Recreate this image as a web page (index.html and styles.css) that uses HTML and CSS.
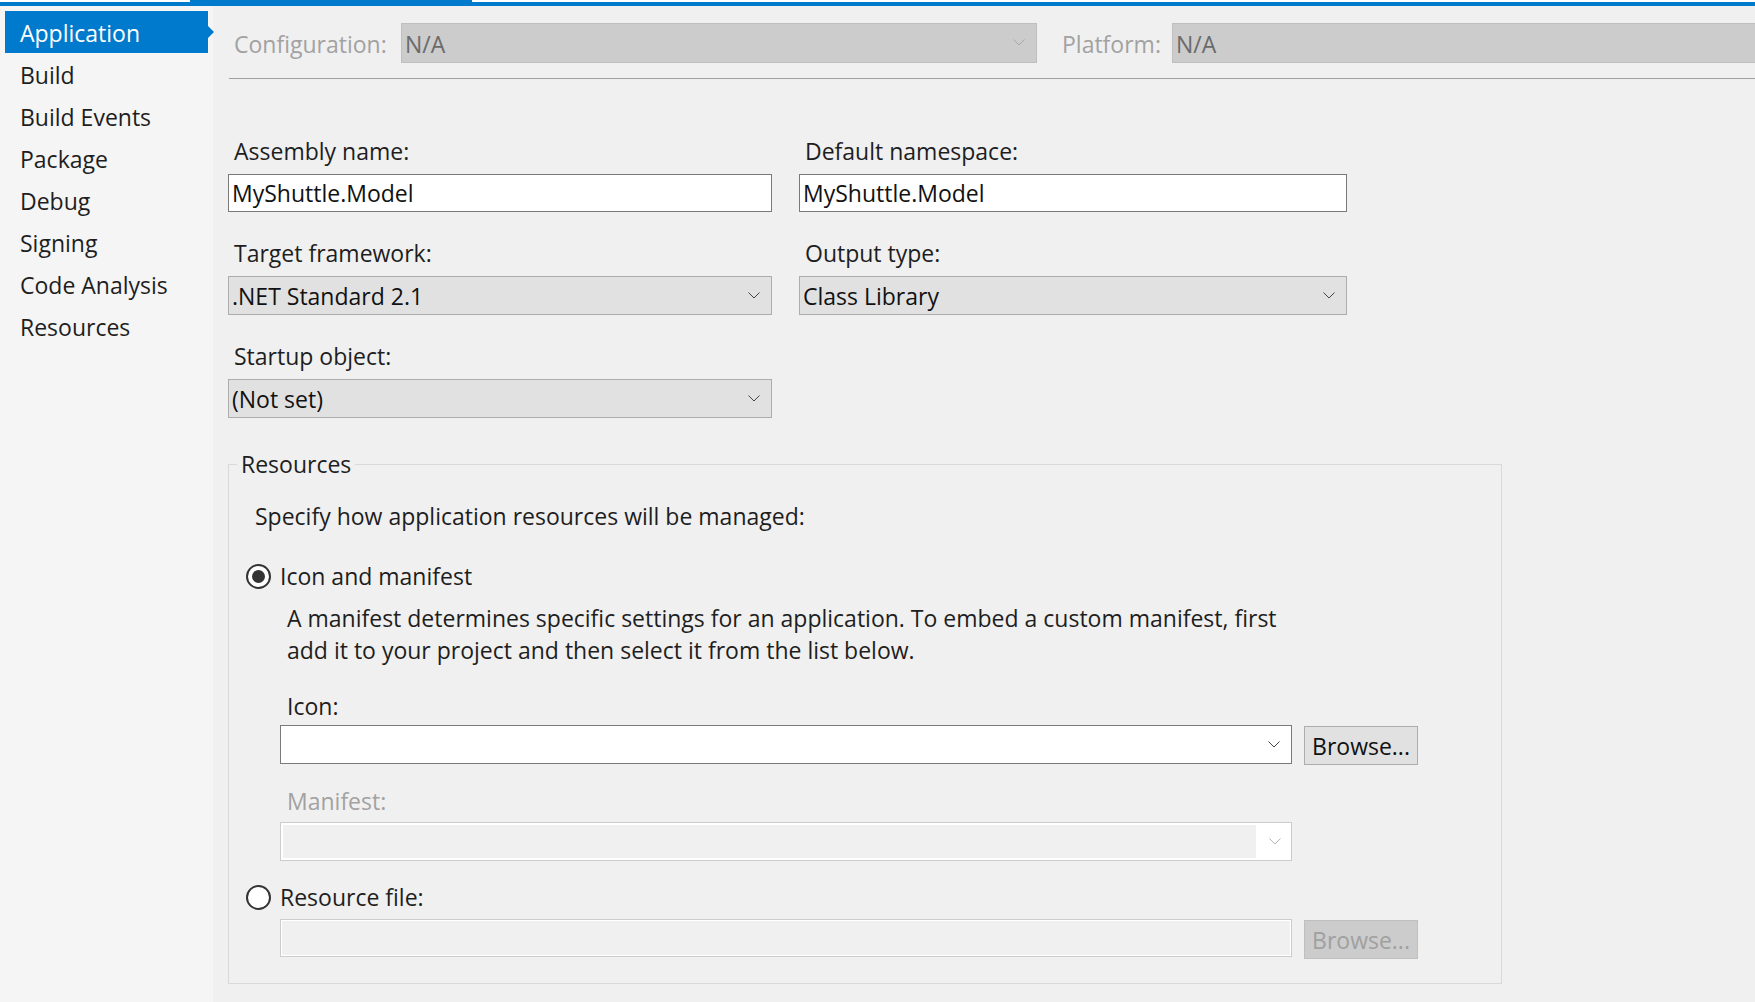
FILE: index.html
```html
<!DOCTYPE html>
<html lang="en">
<head>
<meta charset="utf-8">
<title>MyShuttle.Model - Application</title>
<link rel="stylesheet" href="styles.css">
</head>
<body>
<div class="topbar">
  <div class="tb-line tb-left"></div>
  <div class="tb-tab"></div>
  <div class="tb-line tb-right"></div>
</div>
<div class="app">
  <nav class="sidebar">
    <div class="nav-item selected">Application</div>
    <div class="nav-item">Build</div>
    <div class="nav-item">Build Events</div>
    <div class="nav-item">Package</div>
    <div class="nav-item">Debug</div>
    <div class="nav-item">Signing</div>
    <div class="nav-item">Code Analysis</div>
    <div class="nav-item">Resources</div>
  </nav>
  <main class="main">
    <div class="config-row">
      <span class="cfg-label">Configuration:</span>
      <div class="combo combo-ro cfg-combo">
        <span class="combo-text">N/A</span>
        <svg class="chev" width="12" height="7" viewBox="0 0 12 7"><path d="M0.5 0.5 L6 6 L11.5 0.5" fill="none" stroke="#a8a8a8" stroke-width="1"/></svg>
      </div>
      <span class="cfg-label plat-label">Platform:</span>
      <div class="combo combo-ro plat-combo">
        <span class="combo-text">N/A</span>
      </div>
    </div>
    <div class="separator"></div>

    <div class="form-grid">
      <div class="field">
        <div class="label">Assembly name:</div>
        <div class="textbox">MyShuttle.Model</div>
      </div>
      <div class="field">
        <div class="label">Default namespace:</div>
        <div class="textbox">MyShuttle.Model</div>
      </div>
      <div class="field">
        <div class="label">Target framework:</div>
        <div class="combo">
          <span class="combo-text">.NET Standard 2.1</span>
          <svg class="chev" width="12" height="7" viewBox="0 0 12 7"><path d="M0.5 0.5 L6 6 L11.5 0.5" fill="none" stroke="#444" stroke-width="1"/></svg>
        </div>
      </div>
      <div class="field">
        <div class="label">Output type:</div>
        <div class="combo">
          <span class="combo-text">Class Library</span>
          <svg class="chev" width="12" height="7" viewBox="0 0 12 7"><path d="M0.5 0.5 L6 6 L11.5 0.5" fill="none" stroke="#444" stroke-width="1"/></svg>
        </div>
      </div>
      <div class="field">
        <div class="label">Startup object:</div>
        <div class="combo">
          <span class="combo-text">(Not set)</span>
          <svg class="chev" width="12" height="7" viewBox="0 0 12 7"><path d="M0.5 0.5 L6 6 L11.5 0.5" fill="none" stroke="#444" stroke-width="1"/></svg>
        </div>
      </div>
    </div>

    <fieldset class="group">
      <legend class="group-legend">Resources</legend>
      <div class="intro">Specify how application resources will be managed:</div>

      <div class="radio-row first-radio">
        <span class="radio checked"></span>
        <span class="radio-label">Icon and manifest</span>
      </div>
      <div class="indent">
        <p class="desc">A manifest determines specific settings for an application. To embed a custom manifest, first<br>add it to your project and then select it from the list below.</p>
        <div class="sub-label icon-label">Icon:</div>
        <div class="ctrl-row">
          <div class="wide-combo editable">
            <svg class="chev" width="12" height="7" viewBox="0 0 12 7"><path d="M0.5 0.5 L6 6 L11.5 0.5" fill="none" stroke="#444" stroke-width="1"/></svg>
          </div>
          <div class="button">Browse...</div>
        </div>
        <div class="sub-label disabled manifest-label">Manifest:</div>
        <div class="ctrl-row">
          <div class="wide-combo disabled-combo">
            <div class="dc-field"></div>
            <div class="dc-btn">
              <svg class="chev" width="12" height="7" viewBox="0 0 12 7"><path d="M0.5 0.5 L6 6 L11.5 0.5" fill="none" stroke="#b4b4b4" stroke-width="1"/></svg>
            </div>
          </div>
        </div>
      </div>

      <div class="radio-row second-radio">
        <span class="radio"></span>
        <span class="radio-label">Resource file:</span>
      </div>
      <div class="indent">
        <div class="ctrl-row res-row">
          <div class="wide-combo disabled-box"></div>
          <div class="button button-disabled">Browse...</div>
        </div>
      </div>
    </fieldset>
  </main>
</div>
</body>
</html>
```

FILE: styles.css
```css
* {
  box-sizing: border-box;
}

html, body {
  margin: 0;
  padding: 0;
}

body {
  width: 1755px;
  height: 1002px;
  overflow: hidden;
  background: #f0f0f0;
  color: #1e1e1e;
  font-family: "Segoe UI", "Open Sans", "Noto Sans", sans-serif;
  font-size: 23px;
  line-height: 30px;
}

/* top accent line */
.topbar {
  display: flex;
  align-items: flex-end;
  height: 6px;
  background: #ffffff;
}

.tb-line {
  height: 4px;
  background: #007acc;
}

.tb-left {
  width: 190px;
}

.tb-tab {
  width: 282px;
  height: 6px;
  background: #007acc;
}

.tb-right {
  flex: 1;
}

.app {
  display: flex;
  height: 996px;
}

/* left navigation */
.sidebar {
  width: 213px;
  flex: none;
  background: #f5f5f5;
  padding-top: 5px;
}

.nav-item {
  position: relative;
  margin-left: 5px;
  width: 203px;
  height: 42px;
  padding: 7px 0 0 15px;
  line-height: 30px;
  color: #1e1e1e;
}

.nav-item.selected {
  background: #007acc;
  color: #ffffff;
}

.nav-item.selected::after {
  content: "";
  position: absolute;
  right: -6px;
  top: 15px;
  border-left: 6px solid #007acc;
  border-top: 6px solid transparent;
  border-bottom: 6px solid transparent;
}

/* main page */
.main {
  flex: 1;
  padding: 17px 0 0 15px;
  display: flex;
  flex-direction: column;
  align-items: flex-start;
}

.config-row {
  display: flex;
  align-items: center;
  width: 100%;
  padding-left: 6px;
  height: 40px;
}

.cfg-label {
  width: 167px;
  flex: none;
  padding-top: 2px;
  color: #a2a2a2;
}

.plat-label {
  width: 110px;
  margin-left: 25px;
}

.combo {
  position: relative;
  display: flex;
  align-items: center;
  height: 39px;
  background: #e1e1e1;
  border: 1px solid #adadad;
  padding-left: 3px;
  color: #111;
}

.combo .chev {
  position: absolute;
  right: 11px;
  top: 15px;
}

.combo-ro {
  height: 40px;
  padding-top: 2px;
  background: #cccccc;
  border-color: #bfbfbf;
  color: #6a6a6a;
}

.cfg-combo {
  width: 636px;
  flex: none;
}

.plat-combo {
  flex: 1;
  border-right: none;
}

.separator {
  width: calc(100% - 1px);
  margin: 15px 0 0 1px;
  height: 1px;
  background: #a0a0a0;
}

/* two-column form */
.form-grid {
  display: grid;
  grid-template-columns: 544px 548px;
  column-gap: 27px;
  row-gap: 26px;
  margin-top: 57px;
}

.label {
  padding-left: 6px;
  margin-bottom: 8px;
  color: #1e1e1e;
}

.textbox {
  display: flex;
  align-items: center;
  height: 38px;
  background: #ffffff;
  border: 1px solid #7a7a7a;
  padding-left: 3px;
  color: #111;
}

/* resources group */
.group {
  width: 1274px;
  margin: 31px 0 0 0;
  padding: 0 0 24px 16px;
  border: 1px solid #d9d9d9;
  min-width: 0;
}

.group-legend {
  margin-left: -8px;
  padding: 0 4px;
  color: #1e1e1e;
}

.intro {
  margin-top: 22px;
  padding-left: 10px;
}

.radio-row {
  display: flex;
  align-items: center;
  height: 30px;
}

.first-radio {
  margin-top: 30px;
}

.second-radio {
  margin-top: 21px;
}

.radio {
  width: 25px;
  height: 25px;
  margin-left: 1px;
  border: 2px solid #333333;
  border-radius: 50%;
  background: #ffffff;
  display: flex;
  align-items: center;
  justify-content: center;
  flex: none;
}

.radio.checked::before {
  content: "";
  width: 13px;
  height: 13px;
  border-radius: 50%;
  background: #333333;
}

.radio-label {
  margin-left: 9px;
}

.indent {
  padding-left: 35px;
}

.desc {
  margin: 11px 0 0 0;
  padding-left: 7px;
  line-height: 32px;
}

.sub-label {
  padding-left: 7px;
}

.icon-label {
  margin-top: 25px;
}

.manifest-label {
  margin-top: 21px;
}

.sub-label.disabled {
  color: #a2a2a2;
}

.ctrl-row {
  display: flex;
  align-items: flex-start;
  gap: 12px;
  margin-top: 4px;
}

.wide-combo {
  position: relative;
  width: 1012px;
  height: 39px;
  flex: none;
}

.wide-combo .chev {
  position: absolute;
  right: 11px;
  top: 15px;
}

.editable {
  background: #ffffff;
  border: 1px solid #7a7a7a;
}

.disabled-combo {
  display: flex;
  border: 1px solid #cccccc;
  background: #ffffff;
  padding: 2px 0 2px 2px;
}

.dc-field {
  flex: 1;
  background: #f0f0f0;
}

.dc-btn {
  width: 35px;
  position: relative;
}

.dc-btn .chev {
  right: 10px;
  top: 13px;
}

.manifest-label + .ctrl-row {
  margin-top: 6px;
}

.res-row {
  margin-top: 7px;
}

.disabled-box {
  height: 38px;
  border: 1px solid #cccccc;
  background: #f0f0f0;
  box-shadow: inset 0 0 0 1px #ffffff;
}

.button {
  width: 114px;
  height: 39px;
  margin-top: 1px;
  background: #e1e1e1;
  border: 1px solid #adadad;
  display: flex;
  align-items: center;
  justify-content: center;
  color: #111;
}

.button-disabled {
  background: #cccccc;
  border-color: #bfbfbf;
  color: #a0a0a0;
}
```
